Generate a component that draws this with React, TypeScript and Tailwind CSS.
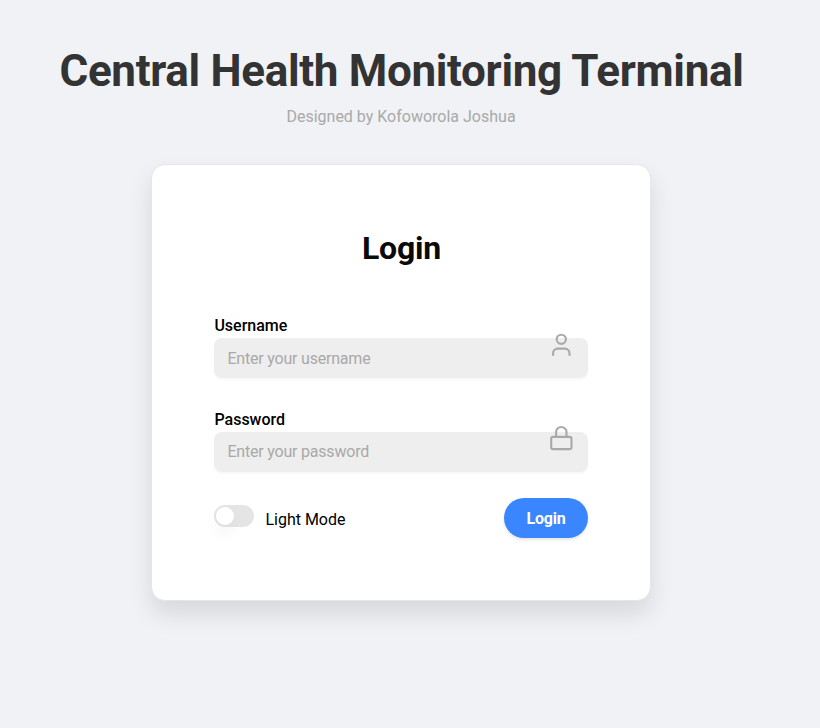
import React from "react";

function Field({ label, placeholder, inputClass, children }: { label: string; placeholder: string; inputClass: string; children: React.ReactNode }) {
  return (
    <div className="relative h-[94px]">
      <label className="block h-[23px] pl-[0.4px] text-base font-medium leading-[21px]">{label}</label>
      <input
        placeholder={placeholder}
        className={`block h-10 w-full rounded-lg bg-[#eeeeee] px-[13.4px] text-base tracking-[-0.2px] text-black shadow-[0_2px_2px_rgba(0,0,0,0.03)] outline-none placeholder:text-[#a9a9a9] ${inputClass}`}
      />
      <span className="absolute right-[13px] top-4 text-[#a9a9a9]">{children}</span>
    </div>
  );
}

function UserIcon() {
  return (
    <svg width="28" height="28" viewBox="0 0 28 28" fill="none" stroke="currentColor" strokeWidth="2.1" strokeLinecap="butt">
      <circle cx="14.3" cy="8.3" r="4.6" />
      <path d="M6.1 24.8v-2.6a4.6 4.6 0 0 1 4.6-4.6h7.2a4.6 4.6 0 0 1 4.6 4.6v2.6" />
    </svg>
  );
}

function LockIcon() {
  return (
    <svg width="28" height="28" viewBox="0 0 28 28" fill="none" stroke="currentColor" strokeWidth="2.1">
      <rect x="4.2" y="11.9" width="20.3" height="12.2" rx="1.9" />
      <path d="M9.1 11.9V7.2a5.2 5.2 0 0 1 10.4 0v4.7" />
    </svg>
  );
}

export default function App() {
  return (
    <div className="h-[728px] overflow-hidden bg-[#f0f2f6] font-[Roboto,sans-serif] text-black">
      <main className="flex w-[802px] flex-col items-center pt-[45px]">
        <h1 className="whitespace-nowrap pl-px text-[44px] font-bold leading-[52px] tracking-[-0.32px] text-[#333333]">
          Central Health Monitoring Terminal
        </h1>
        <p className="mt-[9px] text-base leading-[22px] text-[#a9a9a9]">Designed by Kofoworola Joshua</p>
        <section className="mt-9 h-[437px] w-[500px] rounded-[14px] border border-[#e5e6e9] bg-white px-[62px] pt-[64px] shadow-[0_13px_25px_rgba(0,0,0,0.11)]">
          <h2 className="h-[86px] pl-px text-center text-[32px] font-bold leading-[38px] tracking-[-0.2px] text-[#0a0a0a]">Login</h2>
          <Field label="Username" placeholder="Enter your username" inputClass="">
            <UserIcon />
          </Field>
          <Field label="Password" placeholder="Enter your password" inputClass="pb-0.5">
            <LockIcon />
          </Field>
          <div className="-mt-[11px] flex items-start justify-between">
            <div className="flex pt-[13px]">
              <span className="block h-[22px] w-10 rounded-full bg-[#e5e5e5] p-[2px]">
                <span className="block size-[18px] rounded-full bg-white shadow-[0_8px_16px_rgba(0,0,0,0.05)]" />
              </span>
              <span className="ml-[11.4px] mt-1 text-base leading-[22px]">Light Mode</span>
            </div>
            <button className="mt-[6px] h-10 w-[84px] rounded-full bg-[#3a86ff] pt-0.5 text-base font-bold tracking-[-0.2px] text-white shadow-[0_2px_3px_rgba(0,0,0,0.1)]">
              Login
            </button>
          </div>
        </section>
      </main>
    </div>
  );
}
